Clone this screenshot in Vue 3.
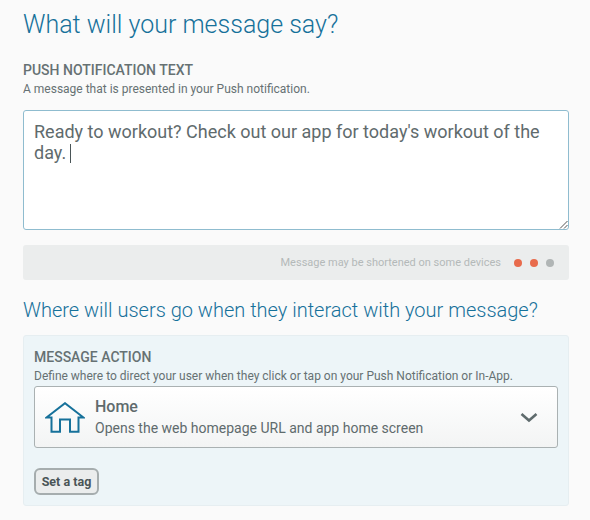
<template>
  <div class="page">
    <h1 class="title">What will your message say?</h1>
    <div class="label first">PUSH NOTIFICATION TEXT</div>
    <p class="hint">A message that is presented in your Push notification.</p>
    <div class="textarea">
      <span>Ready to workout? Check out our app for today's workout of the day.</span><span class="caret"></span>
      <svg class="grip" width="9" height="9" viewBox="0 0 9 9">
        <path d="M1 8.5 8.5 1M5 8.5 8.5 5" stroke="#555" stroke-width="1" fill="none" />
      </svg>
    </div>
    <div class="meter">
      <span class="meter-text">Message may be shortened on some devices</span>
      <span class="dot on"></span>
      <span class="dot on"></span>
      <span class="dot"></span>
    </div>
    <h2 class="subtitle">Where will users go when they interact with your message?</h2>
    <section class="panel">
      <div class="label">MESSAGE ACTION</div>
      <p class="hint">Define where to direct your user when they click or tap on your Push Notification or In-App.</p>
      <div class="select">
        <svg class="home" width="40" height="31" viewBox="0 0 40 31">
          <path d="M1.5 15.5 20 1.2 38.5 15.5H33.5V29.8H25V17.5H15V29.8H6.5V15.5Z" fill="none" stroke="#16719a" stroke-width="2" />
        </svg>
        <div class="select-text">
          <div class="select-title">Home</div>
          <div class="select-desc">Opens the web homepage URL and app home screen</div>
        </div>
        <svg class="chev" width="18" height="11" viewBox="0 0 18 11">
          <path d="M1.5 2 9 8.5 16.5 2" fill="none" stroke="#5f6b6d" stroke-width="2.6" />
        </svg>
      </div>
      <button class="tag">Set a tag</button>
    </section>
  </div>
</template>

<script setup>
</script>

<style>
html, body { margin: 0; background: #fafafa; }
</style>

<style scoped>
.page {
  width: 546px;
  height: 520px;
  margin-left: 23px;
  padding-top: 9px;
  box-sizing: border-box;
  overflow: hidden;
  font-family: Roboto, sans-serif;
  color: #5f6b6d;
}
.title {
  margin: 0;
  font-size: 25px;
  line-height: 32px;
  font-weight: 300;
  color: #16719a;
}
.subtitle {
  margin: 15px 0 0;
  font-size: 20px;
  line-height: 30px;
  font-weight: 300;
  color: #16719a;
}
.label {
  font-size: 14px;
  line-height: 18px;
  font-weight: 500;
  color: #667173;
}
.first { margin-top: 20px; }
.hint {
  margin: 2px 0 0;
  font-size: 12px;
  line-height: 16px;
  color: #667173;
}
.textarea {
  position: relative;
  box-sizing: border-box;
  height: 120px;
  margin-top: 13px;
  padding: 10px 10px;
  background: #fff;
  border: 1px solid #8fbccf;
  border-radius: 3px;
  font-size: 18px;
  line-height: 21px;
  color: #5f6b6d;
}
.caret {
  display: inline-block;
  width: 1px;
  height: 19px;
  margin-left: 4px;
  vertical-align: -4px;
  background: #4a5557;
}
.grip { position: absolute; right: 0; bottom: 0; }
.meter {
  display: flex;
  align-items: center;
  justify-content: flex-end;
  height: 35px;
  margin-top: 15px;
  padding-right: 15px;
  background: #ebeded;
  border-radius: 3px;
  gap: 8px;
}
.meter-text {
  margin-right: 5px;
  font-size: 11px;
  color: #b4b9b9;
}
.dot { width: 8px; height: 8px; border-radius: 50%; background: #b0b5b5; }
.dot.on { background: #e86b4c; }
.panel {
  box-sizing: border-box;
  height: 171px;
  margin-top: 10px;
  padding: 12px 10px;
  background: #edf5f8;
  border: 1px solid #e6eef1;
  border-radius: 3px;
}
.select {
  display: flex;
  align-items: center;
  box-sizing: border-box;
  height: 62px;
  margin-top: 2px;
  padding: 0 19px 0 10px;
  background: linear-gradient(#fff, #f3f4f4);
  border: 1px solid #aab1b2;
  border-radius: 3px;
}
.select-text { flex: 1; margin-left: 10px; }
.select-title { font-size: 16px; line-height: 20px; font-weight: 500; }
.select-desc { font-size: 14px; line-height: 20px; margin-top: 1px; }
.tag {
  display: block;
  box-sizing: border-box;
  width: 65px;
  height: 27px;
  margin-top: 20px;
  padding: 0;
  background: #ebeded;
  border: 2px solid #a6adae;
  border-radius: 6px;
  font-family: Roboto, sans-serif;
  font-size: 12.5px;
  font-weight: 700;
  color: #4a5557;
}
</style>
